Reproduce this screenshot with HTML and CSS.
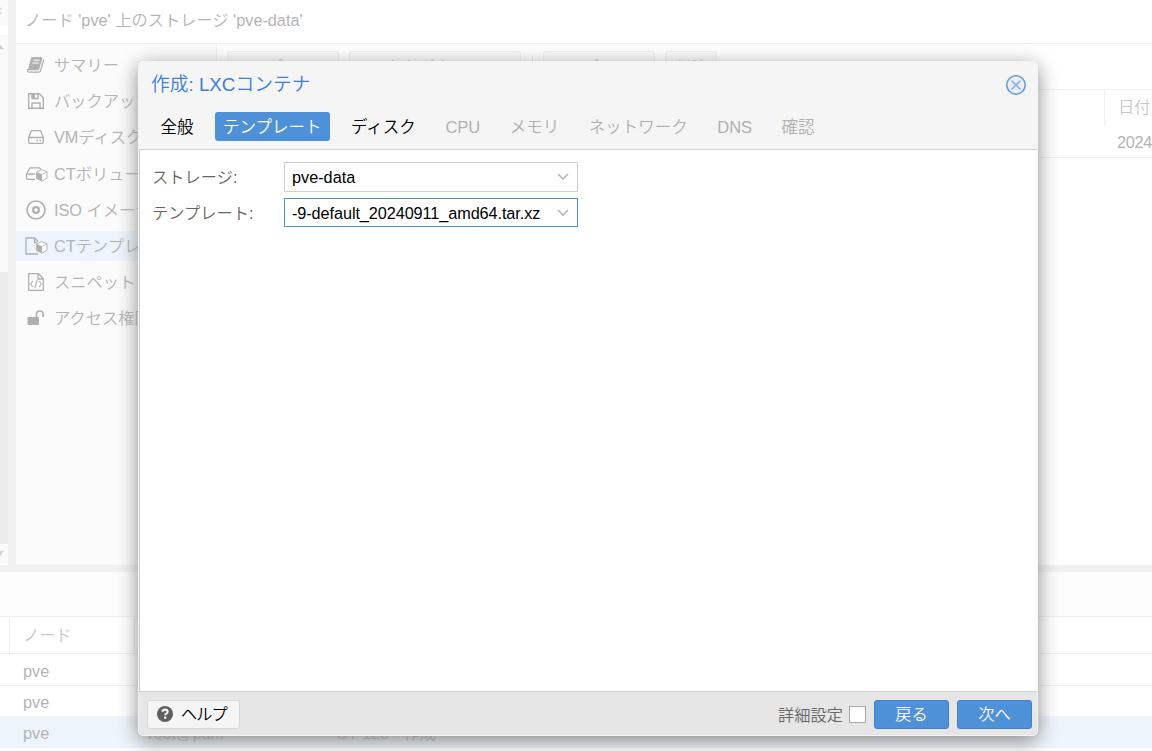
FILE: index.html
```html
<!DOCTYPE html>
<html lang="ja">
<head>
  <meta charset="UTF-8">
  <title>pve - Proxmox Virtual Environment</title>
  <link rel="stylesheet" href="styles.css">
</head>
<body>
  <div class="app">
    <div class="upper">
      <!-- Resource tree -->
      <div class="tree">
        <div class="tree-settings"><svg width="8" height="26" viewBox="0 0 8 26"><path d="M0 8l1.500 1.500M0 14l1.500-1.500" fill="none" stroke="#ddd" stroke-width="2"/></svg></div>
        <div class="tree-scroll">
          <svg width="8" height="20" viewBox="0 0 8 20"><path d="M-3 14L0 10L4 14z" fill="#c8c8c8"/></svg>
          <div class="track"></div>
          <svg width="8" height="20" viewBox="0 0 8 20"><path d="M-3 7H4L0 12z" fill="#d4d4d4"/></svg>
        </div>
      </div>

      <div class="main">
        <div class="main-title">ノード 'pve' 上のストレージ 'pve-data'</div>
        <div class="main-row">
          <div class="nav">
            <div class="nav-item"><svg class="icon" viewBox="0 0 24 20"><path d="M8.300 2h9q1.500 0 1 1.500L15.300 14q-.4 1.200-1.500 1.200H3.800L7.100 3Q7.400 2 8.300 2z" fill="#b0b0b0"/><path d="M9.300 5.300h6.500M8.500 8h6.500" stroke="#fbfbfb" stroke-width="1.100"/><path d="M3.800 14q-.8 3.200 1.500 3.200h9.500q1.300 0 1.700-1.300L19.800 4.500" fill="none" stroke="#b0b0b0" stroke-width="1.200"/></svg>サマリー</div>
            <div class="nav-item"><svg class="icon" viewBox="0 0 24 20"><path d="M4.700 2.700h10.600l4 4v10.600H4.700zM8 17v-5h8v5M8 3v4.500h6V3" fill="none" stroke="#b0b0b0" stroke-width="1.400"/><path d="M8 3h3v4.500H8z" fill="#b0b0b0"/></svg>バックアップ</div>
            <div class="nav-item"><svg class="icon" viewBox="0 0 24 20"><path d="M4.700 10.500L7 4.500Q7.300 3.700 8.200 3.700h7.600q.9 0 1.200.8l2.300 6v4.800q0 1-1 1H5.700q-1 0-1-1v-4.800h14.600" fill="none" stroke="#b0b0b0" stroke-width="1.300"/><path d="M12.500 12.700h1.500v1.500h-1.500zM15.700 12.700h1.500v1.500h-1.500z" fill="#b0b0b0"/></svg>VMディスク</div>
            <div class="nav-item"><svg class="icon" viewBox="0 0 24 20"><path d="M11 15.300H3.500q-1 0-1-1v-4L5.500 4.500q.3-.7 1.200-.7h8.600L17 5.500M3 10h8" fill="none" stroke="#b0b0b0" stroke-width="1.300"/><path d="M12.500 8l5-2.300 5.500 1.800v6.800l-5 2.700-5.500-2.500z" fill="#fbfbfb" stroke="#b0b0b0" stroke-width=".9"/><path d="M12.500 8l5.500 2.200V17l-5.500-2.500z" fill="#b0b0b0"/><path d="M18 10.200l5-2.700" stroke="#b0b0b0" stroke-width=".8"/></svg>CTボリューム</div>
            <div class="nav-item"><svg class="icon" viewBox="0 0 24 20"><circle cx="12" cy="10" r="9" fill="none" stroke="#b0b0b0" stroke-width="1.600"/><circle cx="12" cy="10" r="2.900" fill="none" stroke="#b0b0b0" stroke-width="2.200"/></svg>ISO イメージ</div>
            <div class="nav-item selected"><svg class="icon" viewBox="0 0 24 20"><path d="M14 18H2V2h8.500l3.500 3.500M10.500 2v4.500H13" fill="none" stroke="#b0b0b0" stroke-width="1.300"/><path d="M12.500 8l5-2.300 5.500 1.800v6.800l-5 2.700-5.500-2.500z" fill="#fbfbfb" stroke="#b0b0b0" stroke-width=".9"/><path d="M12.500 8l5.500 2.200V17l-5.500-2.500z" fill="#b0b0b0"/><path d="M18 10.200l5-2.700" stroke="#b0b0b0" stroke-width=".8"/></svg>CTテンプレート</div>
            <div class="nav-item"><svg class="icon" viewBox="0 0 24 20"><path d="M4.700 1.700h9.800l4.800 4.800v11.800H4.700zM14 2v5h5" fill="none" stroke="#b0b0b0" stroke-width="1.300"/><path d="M9 9l-2.500 3L9 15M15 9l2.500 3-2.500 3M13 8l-2 8" fill="none" stroke="#b0b0b0" stroke-width="1.100"/></svg>スニペット</div>
            <div class="nav-item"><svg class="icon" viewBox="0 0 24 20"><rect x="3.500" y="9" width="11.500" height="8" rx="1" fill="#b0b0b0"/><path d="M12.500 9V6.500q0-3.500 3.300-3.500t3.300 3.500V9" fill="none" stroke="#b0b0b0" stroke-width="1.700"/></svg>アクセス権限</div>
          </div>
          <div class="content">
            <div class="toolbar">
              <span class="tool upload">アップロード</span>
              <span class="tool download">URLからダウンロード</span>
              <span class="tool-sep"></span>
              <span class="tool template">テンプレート</span>
              <span class="tool remove">削除</span>
            </div>
            <div class="content-head"><span class="date-head">日付</span></div>
            <div class="content-row"><span class="date">2024</span></div>
          </div>
        </div>
      </div>
    </div>

    <!-- Task log -->
    <div class="log">
      <div class="log-tabs"></div>
      <div class="log-row log-head"><span></span><span>ノード</span><span></span><span></span></div>
      <div class="log-row"><span></span><span>pve</span><span></span><span></span></div>
      <div class="log-row"><span></span><span>pve</span><span></span><span></span></div>
      <div class="log-row current"><span></span><span>pve</span><span>root@pam</span><span>CT 120 - 作成</span></div>
    </div>
  </div>

  <div class="dialog">
    <div class="dialog-head">
      <div class="dialog-title">
        <span>作成: LXCコンテナ</span>
        <svg width="22" height="22" viewBox="0 0 22 22"><circle cx="11" cy="11" r="9.200" fill="#e9f0fb" stroke="#6c9bd2" stroke-width="1.600"/><path d="M6.500 6.500l9 9M15.500 6.500l-9 9" stroke="#8fb0e6" stroke-width="1.700"/></svg>
      </div>
      <div class="tabs">
        <span class="tab">全般</span>
        <span class="tab active">テンプレート</span>
        <span class="tab">ディスク</span>
        <span class="tab disabled">CPU</span>
        <span class="tab disabled">メモリ</span>
        <span class="tab disabled">ネットワーク</span>
        <span class="tab disabled">DNS</span>
        <span class="tab disabled">確認</span>
      </div>
    </div>
    <div class="dialog-body">
      <div class="field">
        <span class="label">ストレージ:</span>
        <div class="combo"><span>pve-data</span><svg width="12" height="8" viewBox="0 0 12 8"><path d="M1 1l5 5 5-5" fill="none" stroke="#b8b8b8" stroke-width="1.600"/></svg></div>
      </div>
      <div class="field">
        <span class="label">テンプレート:</span>
        <div class="combo focus"><span>-9-default_20240911_amd64.tar.xz</span><svg width="12" height="8" viewBox="0 0 12 8"><path d="M1 1l5 5 5-5" fill="none" stroke="#b8b8b8" stroke-width="1.600"/></svg></div>
      </div>
    </div>
    <div class="dialog-foot">
      <span class="help"><svg width="16" height="16" viewBox="0 0 16 16"><circle cx="8" cy="8" r="8" fill="#606060"/><path d="M5.300 5.800Q5.800 3.600 8 3.600q2.600 0 2.600 2.200 0 1.100-1.300 1.800-1 .5-1 1.700" fill="none" stroke="#f5f5f5" stroke-width="2.100"/><path d="M7.100 10.600h2.200v2.200H7.100z" fill="#f5f5f5"/></svg><span class="help-text">ヘルプ</span></span>
      <span class="advanced">詳細設定</span>
      <span class="checkbox"></span>
      <span class="button">戻る</span>
      <span class="button">次へ</span>
    </div>
  </div>
</body>
</html>
```
FILE: styles.css
```css
* {
  box-sizing: border-box;
}
body {
  margin: 0;
  overflow: hidden;
  background: #fff;
  font-family: "Liberation Sans", "Noto Sans CJK JP DemiLight", "Noto Sans CJK JP", sans-serif;
  font-size: 16.25px;
  font-weight: 350;
  line-height: 20px;
  white-space: nowrap;
}
svg {
  display: block;
  flex: none;
}
.app {
  height: 751px;
  color: #b4b4b4;
}
.upper {
  display: flex;
  height: 565px;
}
.tree {
  display: flex;
  flex-direction: column;
  gap: 9px;
  width: 16px;
  border-right: 8px solid #f0f0f0;
}
.tree-settings {
  height: 26px;
  background: #fafafa;
  border-radius: 0 0 3px 0;
}
.tree-scroll {
  display: flex;
  flex-direction: column;
  height: 529px;
  background: #fafafa;
}
.track {
  flex: 1;
  margin-top: 217px;
  background: #ececec;
}
.main {
  flex: 1;
  display: flex;
  flex-direction: column;
}
.main-title {
  height: 44px;
  padding: 10px 9px;
  border-bottom: 1px solid #efefef;
}
.main-row {
  flex: 1;
  display: flex;
}
.nav {
  display: flex;
  flex-direction: column;
  gap: 6.2px;
  width: 201px;
  padding-top: 6px;
  background: #fbfbfb;
  border-right: 1px solid #efefef;
}
.nav-item {
  display: flex;
  align-items: center;
  gap: 6px;
  height: 30px;
  padding-left: 8px;
}
.nav-item.selected {
  background: #edf4fb;
}
.icon {
  width: 24px;
  height: 20px;
}
.content {
  flex: 1;
}
.toolbar {
  display: flex;
  height: 46px;
  padding: 7px 10px;
  border-bottom: 1px solid #efefef;
}
.tool {
  height: 30px;
  padding-top: 5px;
  background: #fbfbfb;
  border: 1px solid #efefef;
  border-radius: 3px;
  text-align: center;
}
.upload {
  width: 112px;
}
.download {
  width: 172px;
  margin-left: 10px;
}
.tool-sep {
  width: 1px;
  margin: 5px 10px 0 11px;
  background: #e8e8e8;
}
.template {
  width: 112px;
}
.remove {
  width: 52px;
  margin-left: 10px;
  color: #d4d4d4;
}
.content-head {
  display: flex;
  justify-content: flex-end;
  height: 36px;
}
.date-head {
  width: 48px;
  padding: 7px 0 0 13px;
  border-left: 1px solid #efefef;
  color: #c8c8c8;
}
.content-row {
  display: flex;
  justify-content: flex-end;
  height: 32px;
  border-bottom: 1px solid #efefef;
}
.date {
  width: 35px;
  padding-top: 6px;
  letter-spacing: -0.3px;
}
.log {
  border-top: 7px solid #f0f0f0;
}
.log-tabs {
  height: 45px;
  background: #fcfcfc;
  border-bottom: 1px solid #efefef;
}
.log-row {
  display: grid;
  grid-template-columns: 10px 125px 188px 1fr;
  height: 31px;
}
.log-row span {
  padding: 6px 13px 0;
}
.log-row span:first-child {
  padding: 0;
}
.log-row + .log-row {
  border-top: 1px solid #efefef;
}
.log-head {
  height: 36px;
  color: #c8c8c8;
}
.log-head span {
  padding: 8px 13px 0;
  border-right: 1px solid #efefef;
}
.log-head span:last-child {
  border-right: none;
}
.log-row.log-head + .log-row {
  height: 32px;
  padding-top: 1px;
}
.log-row.current {
  height: 32px;
  background: #edf4fb;
  border-top-color: #edf4fb;
}
.dialog {
  position: absolute;
  left: 138px;
  top: 61px;
  display: flex;
  flex-direction: column;
  width: 900px;
  height: 675px;
  background: #f5f5f5;
  border: 1px solid #f5f5f5;
  border-radius: 5px;
  box-shadow: 0 5px 20px #888;
  overflow: hidden;
}
.dialog-head {
  height: 87px;
}
.dialog-title {
  display: flex;
  align-items: center;
  justify-content: space-between;
  height: 46px;
  padding: 0 10px 0 12px;
  color: #3d7fd6;
  font-size: 18.75px;
}
.tabs {
  display: flex;
  gap: 13.5px;
  padding: 4px 13.5px;
  font-size: 16.5px;
}
.tab {
  height: 29px;
  padding: 5px 8px;
  border-radius: 3px;
  color: #000;
}
.tab.active {
  background: #4f91d9;
  color: #fff;
}
.tab.disabled {
  color: #b0b0b0;
}
.dialog-body {
  flex: 1;
  display: flex;
  flex-direction: column;
  gap: 6px;
  padding: 12px 12px 0;
  background: #fff;
  border-top: 1px solid #cfcfcf;
  border-left: 1px solid #cfcfcf;
  border-bottom: 1px solid #cfcfcf;
}
.field {
  display: flex;
  align-items: flex-start;
  height: 30px;
}
.label {
  width: 132px;
  padding-top: 5px;
  color: #666;
}
.combo {
  display: flex;
  align-items: center;
  justify-content: space-between;
  width: 294px;
  height: 30px;
  padding: 0 8px 0 7px;
  border: 1px solid #cfcfcf;
  color: #000;
}
.combo.focus {
  height: 29px;
  border-color: #4f91d9;
  letter-spacing: -0.08px;
}
.dialog-foot {
  display: flex;
  align-items: center;
  height: 43px;
  padding: 2px 5px 0 8px;
  background: #e6e6e6;
}
.help {
  display: flex;
  align-items: center;
  gap: 8px;
  width: 93px;
  height: 29px;
  margin-right: auto;
  padding: 0 0 2px 9px;
  background: #f5f5f5;
  border: 1px solid #d8d8d8;
  border-radius: 3px;
  color: #000;
}
.help-text {
  letter-spacing: -1px;
}
.advanced {
  color: #666;
}
.checkbox {
  width: 17px;
  height: 17px;
  margin-left: 6px;
  background: #fff;
  border: 1px solid #aaa;
}
.button {
  width: 75px;
  height: 29px;
  margin-left: 8px;
  padding-top: 3px;
  background: #4f91d9;
  border: 1px solid #3d80cf;
  border-radius: 3px;
  color: #fff;
  text-align: center;
}
```
